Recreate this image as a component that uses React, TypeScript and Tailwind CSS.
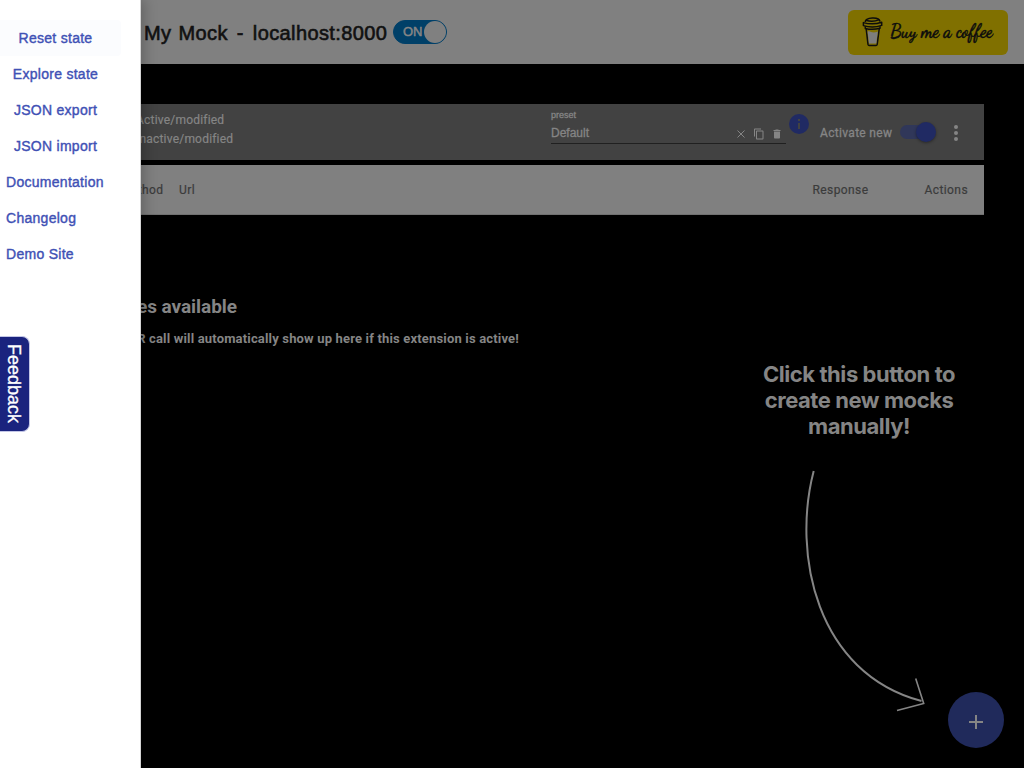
import React from "react";

const ACTIONS = ["Explore state", "JSON export", "JSON import"];
const LINKS = ["Documentation", "Changelog", "Demo Site"];

function CoffeeCup() {
  return (
    <svg className="shrink-0" width="22" height="32" viewBox="0 0 22 32" fill="none" stroke="#0d0d0d" strokeWidth="1.5" strokeLinejoin="round">
      <path d="M4.2 13 L6 28.4 Q6.2 29.4 7.2 29.4 H14 Q15 29.4 15.2 28.4 L17.2 13" fill="#807000" />
      <path d="M5.6 15.5 C8.5 14.3 10 18.2 15.8 15.6 L14.3 27.6 H7 Z" fill="#7d7d7d" stroke="none" />
      <path d="M3.2 6 C3.4 1.2 17 0.2 18 5.5" />
      <path d="M4 4.2 C8 5.6 13 5.4 17.2 3.6" />
      <path d="M1.4 6.6 C7 8.2 14 8.2 19.7 6.2 V9.4 C14 11.4 7 11.4 1.4 9.6 Z" />
      <path d="M3.3 10.2 V12.4 C8 13.6 13 13.6 18 12.2 V10.2" />
    </svg>
  );
}

function CopyIcon() {
  return (
    <svg width="12" height="12" viewBox="0 0 24 24" fill="currentColor">
      <path d="M16 1H4C2.9 1 2 1.9 2 3v14h2V3h12V1zm3 4H8C6.9 5 6 5.9 6 7v14c0 1.1.9 2 2 2h11c1.1 0 2-.9 2-2V7c0-1.1-.9-2-2-2zm0 16H8V7h11v14z" />
    </svg>
  );
}

function TrashIcon() {
  return (
    <svg width="12" height="12" viewBox="0 0 24 24" fill="currentColor">
      <path d="M6 19c0 1.1.9 2 2 2h8c1.1 0 2-.9 2-2V7H6v12zM19 4h-3.5l-1-1h-5l-1 1H5v2h14V4z" />
    </svg>
  );
}

function Drawer() {
  return (
    <aside className="absolute inset-y-0 left-0 w-[141px] border-r border-[#d5d5d5] bg-white pt-5 font-['Liberation_Sans',Arial,sans-serif] text-[14px] leading-9 tracking-[0.28px] text-[#3f51b5] shadow-[4px_0_12px_rgba(0,0,0,0.22)] [-webkit-text-stroke:0.4px_#3f51b5]">
      <button className="block h-9 w-[121px] rounded-r bg-[#fbfcfe] pr-[10px] text-center">Reset state</button>
      {ACTIONS.map((label) => (
        <button key={label} className="block h-9 w-[111px] text-center">{label}</button>
      ))}
      {LINKS.map((label) => (
        <a key={label} className="block h-9 pl-[6px]">{label}</a>
      ))}
      <div className="mt-[64px] flex h-[96px] w-[30px] items-center justify-center rounded-r-[8px] border border-l-0 border-[#c3c6e6] bg-[#1a237e] pr-[2px] text-[18px] leading-[28px] tracking-normal text-white [-webkit-text-stroke:0.3px_#fff] [writing-mode:vertical-rl]">
        Feedback
      </div>
    </aside>
  );
}

export default function App() {
  return (
    <div className="relative flex h-[768px] w-[1024px] flex-col overflow-hidden bg-black font-[Roboto,sans-serif]">
      <header className="flex h-16 shrink-0 items-center bg-[#808080] pl-[144px] pr-4">
        <h1 className="w-[243px] whitespace-pre pt-[2px] font-['Liberation_Sans',Arial,sans-serif] text-[20px] tracking-[0.4px] text-[#111] [-webkit-text-stroke:0.6px_#111] [word-spacing:1px]">My Mock <span className="mx-[2px]">-</span> localhost:8000</h1>
        <div className="mb-[1px] ml-[6px] flex h-6 w-[54px] items-center justify-between rounded-full border border-[#004069] bg-[#004068] pl-[9px]">
          <span className="font-['Liberation_Sans',sans-serif] text-[13px] text-[#858585] [-webkit-text-stroke:0.5px_#858585]">ON</span>
          <span className="h-[22px] w-[22px] rounded-full bg-[#808080]" />
        </div>
        <div className="ml-auto flex h-[45px] w-[160px] items-center rounded-[6px] bg-[#807000] pl-[14px]">
          <CoffeeCup />
          <span className="mb-[2px] ml-[6px] origin-left scale-x-[0.89] whitespace-nowrap font-['Dancing_Script',cursive] text-[20px] font-bold text-[#0d0d0d] [-webkit-text-stroke:0.4px_#0d0d0d]">Buy me a coffee</span>
        </div>
      </header>

      <main className="flex flex-col px-10 pt-10">
        <section className="flex h-14 bg-[#424242] pl-[96px] text-[12px] tracking-[0.2px] text-[#858585]">
          <div className="w-[415px] pt-[7px] leading-[19px] [-webkit-text-stroke:0.2px_#858585]">
            <div>Active/modified</div>
            <div>Inactive/modified</div>
          </div>
          <div className="h-10 w-[235px] border-b border-[#202020] pt-[5px] font-['Liberation_Sans',sans-serif] tracking-normal [-webkit-text-stroke:0.3px_#858585]">
            <div className="text-[9px] leading-[12px]">preset</div>
            <div className="flex items-center gap-[6px] pr-[3px] pt-[5px] text-[12px] leading-[15px]">
              <span className="flex-1">Default</span>
              <svg width="12" height="12" viewBox="0 0 12 12" stroke="currentColor" fill="none"><path d="M2.5 2.5 L9.5 9.5 M9.5 2.5 L2.5 9.5" /></svg>
              <CopyIcon />
              <TrashIcon />
            </div>
          </div>
          <svg className="ml-[3px] mt-[10px] shrink-0" width="20" height="20" viewBox="0 0 20 20">
            <circle cx="10" cy="10" r="10" fill="#202a63" />
            <path d="M9 5h2v2H9zM9 9h2v6H9z" fill="#424242" />
          </svg>
          <span className="ml-[11px] w-[80px] whitespace-nowrap leading-[58px] tracking-[0.32px] [-webkit-text-stroke:0.3px_#858585]">Activate new</span>
          <div className="mt-[18px] flex h-5 w-9 items-center">
            <div className="flex h-[14px] w-[34px] items-center justify-end rounded-full bg-[#303759]">
              <span className="-mr-[2px] h-5 w-5 shrink-0 rounded-full bg-[#202a63] shadow-[0_1px_3px_rgba(0,0,0,0.4)]" />
            </div>
          </div>
          <svg className="ml-[18px] mt-[20px]" width="4" height="18" viewBox="0 0 4 18" fill="#858585">
            <circle cx="2" cy="3" r="2" /><circle cx="2" cy="9" r="2" /><circle cx="2" cy="15" r="2" />
          </svg>
        </section>

        <section className="mt-[5px] flex h-[50px] items-center border-b border-[#707070] bg-[#808080] pr-4 text-[12px] tracking-[0.42px] text-[#3b3b3b] [-webkit-text-stroke:0.2px_#3b3b3b]">
          <span className="w-[139px] pl-[80px]">Method</span>
          <span>Url</span>
          <span className="ml-auto w-[112px]">Response</span>
          <span>Actions</span>
        </section>

        <section className="pt-[80px] text-right font-bold text-[#858585]">
          <h2 className="flex w-[197px] justify-end whitespace-nowrap text-[19px] leading-6 tracking-[-0.05px]">No responses available</h2>
          <p className="mt-[10px] flex w-[479px] justify-end whitespace-nowrap text-[13px] leading-5 tracking-[0.17px]">Any XHR call will automatically show up here if this extension is active!</p>
        </section>
      </main>

      <div className="absolute left-[739px] top-[361px] w-[240px] text-center font-[Inter,sans-serif] text-[22px] font-bold leading-[26px] tracking-[-0.43px] text-[#858585]">
        Click this button to<br />create new mocks<br />manually!
      </div>
      <svg className="absolute left-[780px] top-[450px]" width="160" height="280" viewBox="0 0 160 280" fill="none" stroke="#858585" strokeWidth="2">
        <path d="M33.7 21 C12 104 36 223 141.5 251" />
        <path d="M135.7 228.5 L143.7 253.5 L117 260.5" strokeWidth="1.6" />
      </svg>
      <button className="absolute left-[948px] top-[692px] flex h-14 w-14 items-center justify-center rounded-full bg-[#202a5b]">
        <svg className="mt-[3px]" width="14" height="14" viewBox="0 0 14 14" fill="none" stroke="#858585" strokeWidth="2"><path d="M7 0V14M0 7H14" /></svg>
      </button>

      <Drawer />
    </div>
  );
}
